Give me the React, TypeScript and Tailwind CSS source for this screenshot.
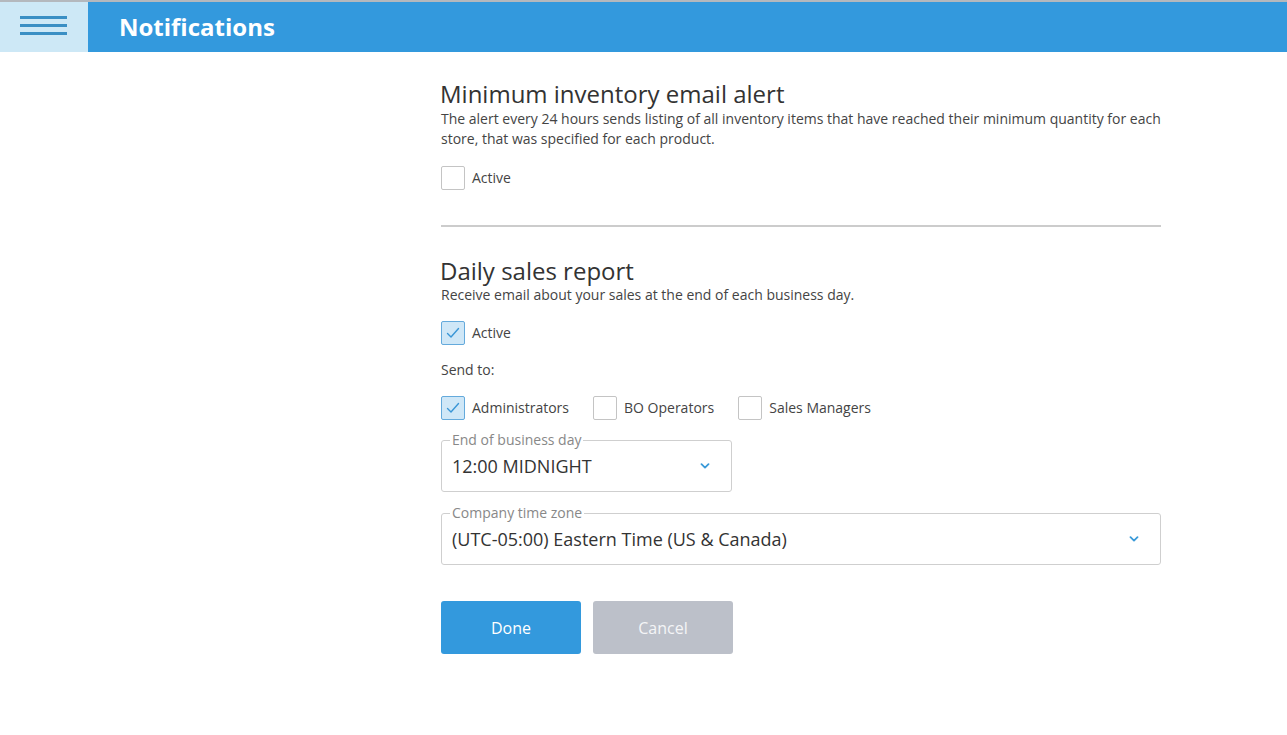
import React from "react";

const font = { fontFamily: '"Open Sans", "Liberation Sans", sans-serif' };

function Check({ checked, label }: { checked?: boolean; label: string }) {
  return (
    <label className="flex items-center gap-[7px]">
      <span
        className={
          checked
            ? "flex h-[24px] w-[24px] items-center justify-center rounded-[2px] border border-[#64aadc] bg-[#cfe7f7]"
            : "flex h-[24px] w-[24px] items-center justify-center rounded-[2px] border border-[#c4c4c4] bg-white"
        }
      >
        {checked && (
          <svg width="14" height="12" viewBox="0 0 14 12" fill="none">
            <path d="M1.5 6.5 L5 10 L12.5 1.5" stroke="#3a96d6" strokeWidth="1.4" strokeLinecap="round" strokeLinejoin="round" />
          </svg>
        )}
      </span>
      <span className="text-[14px] leading-[20px] text-[#444]">{label}</span>
    </label>
  );
}

function Chevron() {
  return (
    <svg width="10" height="6" viewBox="0 0 10 6" fill="none">
      <path d="M1.5 1.2 L5 4.6 L8.5 1.2" stroke="#3a9ad8" strokeWidth="1.8" strokeLinecap="round" strokeLinejoin="round" />
    </svg>
  );
}

function SelectBox({ label, value, className }: { label: string; value: string; className: string }) {
  return (
    <div className={"relative flex h-[52px] items-center justify-between rounded-[3px] border border-[#cfcfcf] pl-[10px] pr-[21px] " + className}>
      <span className="absolute left-[8px] top-[-11px] bg-white px-[2px] text-[14px] leading-[20px] text-[#888]">{label}</span>
      <span className="text-[18px] leading-[24px] text-[#333]">{value}</span>
      <Chevron />
    </div>
  );
}

export default function App() {
  return (
    <div className="min-h-[735px] bg-white" style={font}>
      <header className="flex h-[52px] border-t-2 border-[#b4b8bd] bg-[#3399dd]">
        <div className="flex w-[88px] flex-col items-start justify-start gap-[5px] bg-[#cde8f6] pl-[20px] pt-[14px]">
          <span className="block h-[3px] w-[47px] bg-[#3a8fc4]" />
          <span className="block h-[3px] w-[47px] bg-[#3a8fc4]" />
          <span className="block h-[3px] w-[47px] bg-[#3a8fc4]" />
        </div>
        <h1 className="ml-[31px] self-center text-[24px] font-bold leading-[32px] text-white">Notifications</h1>
      </header>

      <main className="ml-[441px] w-[720px] pt-[28px]">
        <section>
          <h2 className="ml-[-1px] text-[24px] leading-[28px] text-[#333]">Minimum inventory email alert</h2>
          <p className="mt-[1px] text-[14px] leading-[20px] text-[#444]">
            The alert every 24 hours sends listing of all inventory items that have reached their minimum quantity for each store, that was specified for each product.
          </p>
          <div className="mt-[17px]">
            <Check label="Active" />
          </div>
        </section>

        <div className="mt-[35px] h-[2px] w-full bg-[#cccccc]" />

        <section className="mt-[30px]">
          <h2 className="ml-[-1px] text-[24px] leading-[28px] text-[#333]">Daily sales report</h2>
          <p className="text-[14px] leading-[20px] text-[#444]">Receive email about your sales at the end of each business day.</p>
          <div className="mt-[16px]">
            <Check checked label="Active" />
          </div>
          <p className="mt-[15px] text-[14px] leading-[20px] text-[#444]">Send to:</p>
          <div className="mt-[16px] flex items-center gap-[24px]">
            <Check checked label="Administrators" />
            <Check label="BO Operators" />
            <Check label="Sales Managers" />
          </div>
          <div className="mt-[20px] flex flex-col gap-[21px]">
            <SelectBox label="End of business day" value="12:00 MIDNIGHT" className="w-[291px]" />
            <SelectBox label="Company time zone" value="(UTC-05:00) Eastern Time (US & Canada)" className="w-[720px]" />
          </div>
          <div className="mt-[36px] flex gap-[12px]">
            <button className="h-[53px] w-[140px] rounded-[3px] bg-[#3399dd] text-[16px] text-white">Done</button>
            <button className="h-[53px] w-[140px] rounded-[3px] bg-[#bcc0c9] text-[16px] text-[#f4f5f7]">Cancel</button>
          </div>
        </section>
      </main>
    </div>
  );
}
